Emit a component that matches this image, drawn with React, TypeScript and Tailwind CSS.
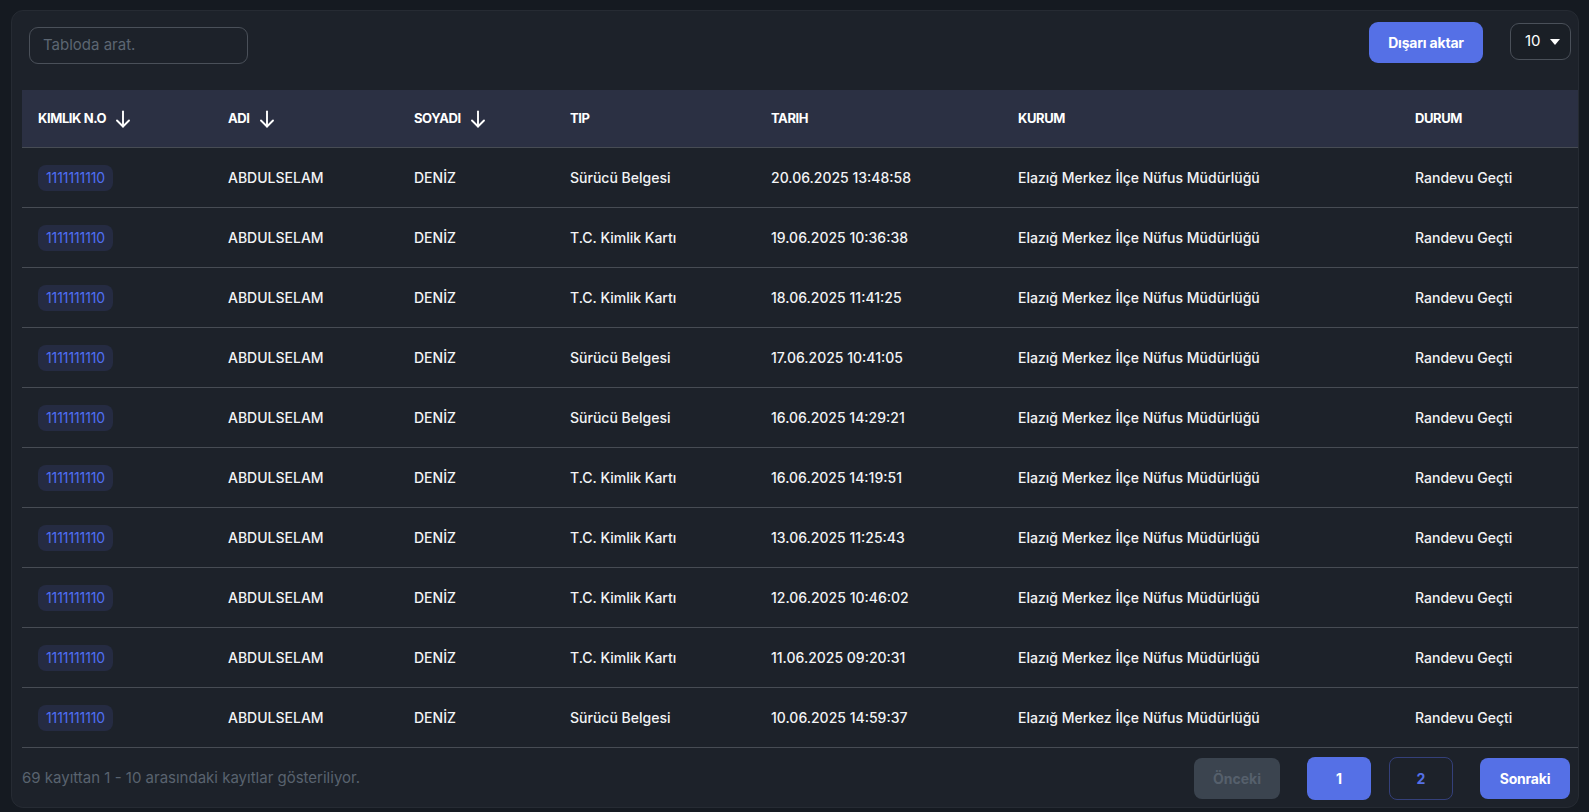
import React from "react";

const rows = [
  ["Sürücü Belgesi", "20.06.2025 13:48:58"],
  ["T.C. Kimlik Kartı", "19.06.2025 10:36:38"],
  ["T.C. Kimlik Kartı", "18.06.2025 11:41:25"],
  ["Sürücü Belgesi", "17.06.2025 10:41:05"],
  ["Sürücü Belgesi", "16.06.2025 14:29:21"],
  ["T.C. Kimlik Kartı", "16.06.2025 14:19:51"],
  ["T.C. Kimlik Kartı", "13.06.2025 11:25:43"],
  ["T.C. Kimlik Kartı", "12.06.2025 10:46:02"],
  ["T.C. Kimlik Kartı", "11.06.2025 09:20:31"],
  ["Sürücü Belgesi", "10.06.2025 14:59:37"],
];

const grid =
  "grid grid-cols-[190px_186px_156px_201px_247px_397px_180px]";

function Arrow() {
  return (
    <svg
      width="16"
      height="18"
      viewBox="0 0 16 18"
      fill="none"
      stroke="currentColor"
      strokeWidth="1.9"
      strokeLinecap="round"
      strokeLinejoin="round"
      className="ml-[9px]"
    >
      <path d="M8 1.5v15" />
      <path d="M2 10.5l6 6 6-6" />
    </svg>
  );
}

function Head({ label, sort }: { label: string; sort?: boolean }) {
  return (
    <div className="flex items-center pl-[16px] text-[13px] font-bold tracking-[-0.4px] text-white">
      <span>{label}</span>
      {sort && <Arrow />}
    </div>
  );
}

export default function App() {
  return (
    <div className="min-h-screen w-full bg-[#151a21] pl-[11px] pt-[10px] font-['Inter','Noto_Sans',sans-serif]">
      <div className="flex h-[798px] w-[1568px] flex-col overflow-hidden rounded-[12px] border border-[#262b33] bg-[#1d222a]">
        {/* Top bar */}
        <div className="flex h-[79px] items-start pl-[17px] pr-[7px]">
          <div className="mt-[16px] flex h-[37px] w-[219px] items-center rounded-[9px] border border-[#4a5059] px-[13px]">
            <span className="text-[15px] text-[#5c6672]">Tabloda arat.</span>
          </div>
          <div className="flex-1" />
          <button className="mt-[11px] flex h-[41px] w-[114px] items-center justify-center rounded-[9px] bg-[#5570e6] text-[14px] font-bold tracking-[-0.2px] text-white">
            Dışarı aktar
          </button>
          <div className="ml-[27px] mt-[12px] flex h-[37px] w-[61px] items-center rounded-[9px] border border-[#4a5059] bg-[#1a1f26] pl-[14px]">
            <span className="text-[15px] text-white">10</span>
            <svg width="10" height="6" viewBox="0 0 10 6" className="ml-[9px]">
              <path d="M0 0h10L5 6z" fill="#ffffff" />
            </svg>
          </div>
        </div>

        {/* Table */}
        <div className="ml-[10px]">
          <div className={`${grid} h-[58px] border-b border-[#474c54] bg-[#2b3043]`}>
            <Head label="KIMLIK N.O" sort />
            <Head label="ADI" sort />
            <Head label="SOYADI" sort />
            <Head label="TIP" />
            <Head label="TARIH" />
            <Head label="KURUM" />
            <Head label="DURUM" />
          </div>
          {rows.map((r, i) => (
            <div
              key={i}
              className={`${grid} h-[60px] items-center border-b border-[#474c54] text-[14px] font-medium text-[#f3f4f6]`}
            >
              <div className="pl-[16px]">
                <span className="inline-flex h-[26px] items-center rounded-[8px] bg-[#252b42] px-[8px] text-[14px] font-normal tracking-[-0.1px] text-[#4f6ef2]">
                  1111111110
                </span>
              </div>
              <div className="pl-[16px]">ABDULSELAM</div>
              <div className="pl-[16px]">DENİZ</div>
              <div className="pl-[16px]">{r[0]}</div>
              <div className="pl-[16px]">{r[1]}</div>
              <div className="pl-[16px]">Elazığ Merkez İlçe Nüfus Müdürlüğü</div>
              <div className="pl-[16px]">Randevu Geçti</div>
            </div>
          ))}
        </div>

        {/* Footer */}
        <div className="ml-[10px] mt-[9px] flex items-center pr-[8px]">
          <span className="text-[15px] text-[#59636f]">
            69 kayıttan 1 - 10 arasındaki kayıtlar gösteriliyor.
          </span>
          <div className="flex-1" />
          <button className="flex h-[41px] w-[86px] items-center justify-center rounded-[8px] bg-[#3b444f] text-[14px] font-bold text-[#56606c]">
            Önceki
          </button>
          <button className="ml-[27px] flex h-[43px] w-[64px] items-center justify-center rounded-[8px] bg-[#5570e6] text-[14px] font-bold text-white">
            1
          </button>
          <button className="ml-[18px] flex h-[43px] w-[64px] items-center justify-center rounded-[8px] border border-[#34407a] text-[14px] font-bold text-[#5570e6]">
            2
          </button>
          <button className="ml-[27px] flex h-[41px] w-[90px] items-center justify-center rounded-[8px] bg-[#5570e6] text-[14px] font-bold tracking-[-0.2px] text-white">
            Sonraki
          </button>
        </div>
      </div>
    </div>
  );
}
